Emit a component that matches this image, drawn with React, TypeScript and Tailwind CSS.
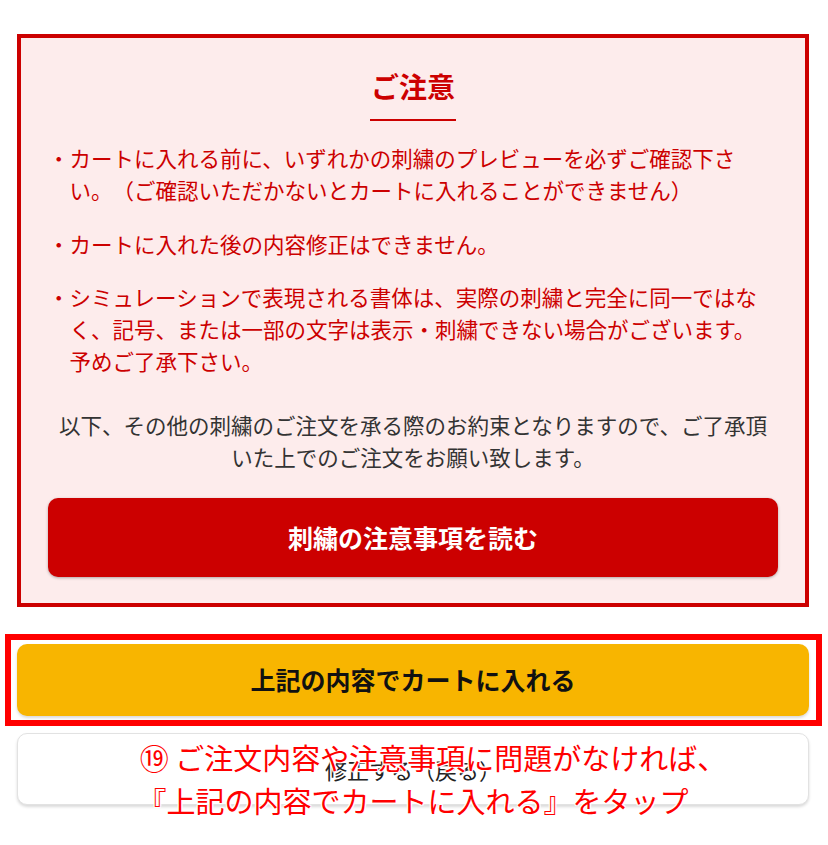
const notes = [
  'カートに入れる前に、いずれかの刺繍のプレビューを必ずご確認下さい。（ご確認いただかないとカートに入れることができません）',
  'カートに入れた後の内容修正はできません。',
  'シミュレーションで表現される書体は、実際の刺繍と完全に同一ではなく、記号、または一部の文字は表示・刺繍できない場合がございます。予めご了承下さい。',
];

const App = () => {
  return (
    <div className="min-h-[845px] bg-white pt-[34px] pr-[19px] pl-[17px] font-['Noto_Sans_CJK_JP','Noto_Sans',sans-serif] [text-spacing-trim:space-all]">
      {/* Caution box */}
      <section className="border-4 border-[#cc0000] bg-[#fdecec] px-[27px] pt-[27px] pb-[26px]">
        <div className="mb-[21px] text-center">
          <h2 className="inline-block border-b-2 border-[#cc0000] px-[1px] pb-[12px] text-[28px] font-bold leading-[42px] text-[#cc0000]">
            ご注意
          </h2>
        </div>

        <ul className="space-y-[21px] pr-[4px] text-[21.5px] leading-[32.25px] text-[#cc0000]">
          {notes.map((note) => (
            <li key={note} className="flex">
              <span className="shrink-0">・</span>
              <span>{note}</span>
            </li>
          ))}
        </ul>

        <p className="mt-[31px] px-[3px] text-center text-[21.5px] leading-[32.25px] text-[#333]">
          以下、その他の刺繍のご注文を承る際のお約束となりますので、ご了承頂いた上でのご注文をお願い致します。
        </p>

        <button className="mt-[25px] flex h-[79px] w-full items-center justify-center rounded-[10px] bg-[#cc0000] text-[25px] font-bold text-white shadow-[0_1px_3px_rgba(0,0,0,0.3)]">
          刺繍の注意事項を読む
        </button>
      </section>

      {/* Add to cart */}
      <div className="relative mt-[37px]">
        <button className="flex h-[72px] w-full items-center justify-center rounded-[10px] bg-[#f8b500] text-[25px] font-bold text-[#111] shadow-[0_2px_3px_rgba(0,0,0,0.15)]">
          上記の内容でカートに入れる
        </button>
        <div className="pointer-events-none absolute -top-[10px] -right-[13px] -bottom-[10px] -left-[12px] border-[6px] border-[#ff0000]" />
      </div>

      {/* Back */}
      <div className="relative mt-[17px]">
        <button className="flex h-[72px] w-full items-center justify-center rounded-[10px] border border-[#e2e2e2] bg-white text-[22px] text-[#222] shadow-[0_2px_3px_rgba(0,0,0,0.15)]">
          修正する（戻る）
        </button>
        {/* annotation */}
        <div className="pointer-events-none absolute top-[3px] -right-[20px] -left-[20px] text-center text-[29px] leading-[43px] text-[#ff0000] [text-shadow:0_0_2px_#fff,0_0_2px_#fff,1px_1px_1px_#fff,-1px_-1px_1px_#fff,1px_-1px_1px_#fff,-1px_1px_1px_#fff]">
          <div className="translate-x-[20px]">⑲ ご注文内容や注意事項に問題がなければ、</div>
          <div>『上記の内容でカートに入れる』をタップ</div>
        </div>
      </div>
    </div>
  );
};

export default App;
